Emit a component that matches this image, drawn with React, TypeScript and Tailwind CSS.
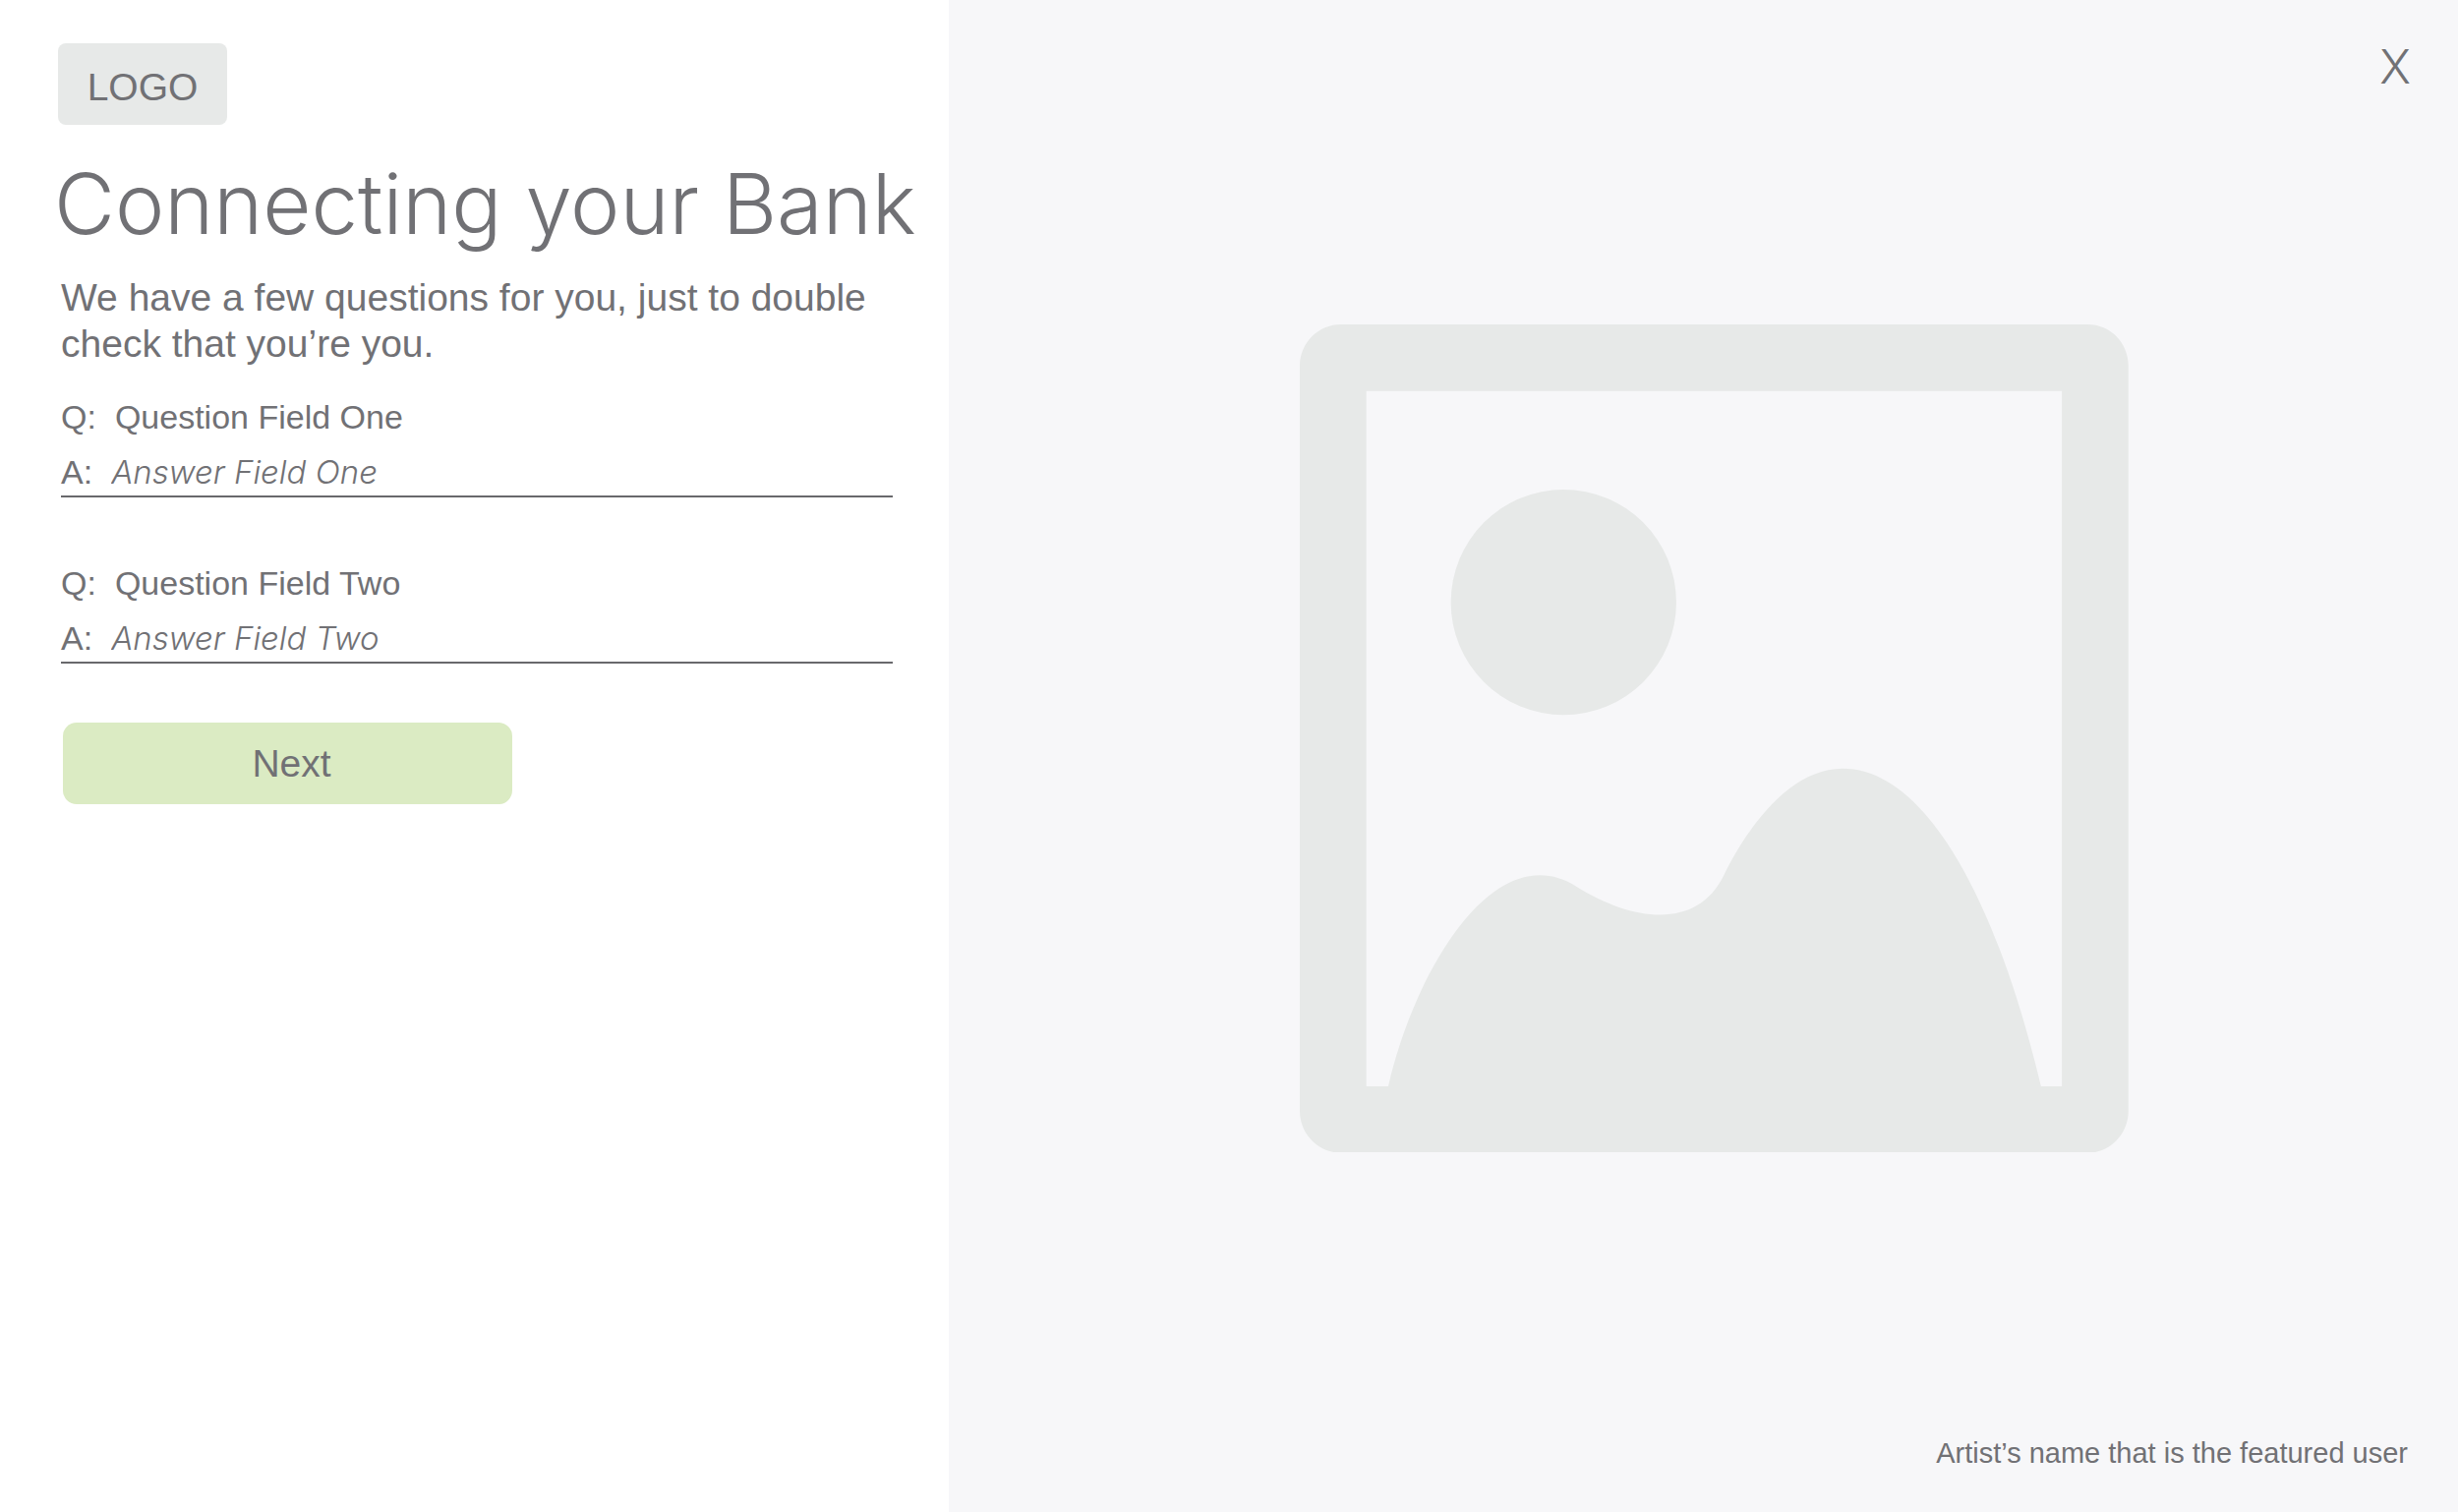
import { useId } from 'react';

type FieldProps = {
  question: string;
  placeholder: string;
};

function QuestionField({ question, placeholder }: FieldProps) {
  const id = useId();
  return (
    <div className="flex flex-col gap-2">
      <label htmlFor={id} className="flex gap-[19px] text-[34px] leading-[48px]">
        <span>Q:</span>
        <span>{question}</span>
      </label>
      <div className="flex gap-[19px] border-b-2 border-[#68686c] text-[34px] leading-[48px]">
        <span>A:</span>
        <input
          id={id}
          type="text"
          placeholder={placeholder}
          className="h-12 min-w-0 flex-1 bg-transparent font-['Inter',sans-serif] text-[33px] font-light italic leading-[48px] outline-none placeholder:text-[#717175] placeholder:opacity-100"
        />
      </div>
    </div>
  );
}

function PicturePlaceholder() {
  return (
    <svg viewBox="0 0 1470 1470" className="w-[55.7%]" role="img" aria-label="Featured artwork">
      <path
        fill="#e7e9e8"
        fillRule="evenodd"
        d="M73 0H1398C1438 0 1470 33 1470 73V1396C1470 1436 1438 1470 1398 1470H73C33 1470 0 1436 0 1396V73C0 33 33 0 73 0ZM118 118V1352H157C202 1152 345 903 492 998C592 1060 706 1075 753 976C787 906 864 788 963 788C1110 788 1236 1020 1315 1352H1352V118Z"
      />
      <circle cx="468" cy="493" r="200" fill="#e7e9e8" />
    </svg>
  );
}

export default function App() {
  return (
    <main className="flex min-h-screen bg-white font-['Liberation_Sans',Arial,sans-serif] text-[#717175]">
      <section className="w-[38.6%] shrink-0 pt-11 pr-[57px] pl-[62px]">
        <div className="-ml-[3px] flex h-[83px] w-[172px] items-center justify-center rounded-lg bg-[#e7e9e8] pt-1.5 text-[39px] leading-none">
          LOGO
        </div>
        <h1 className="mt-[31px] -ml-[7px] whitespace-nowrap font-['Inter',sans-serif] text-[85px] font-light leading-[100px]">
          Connecting your Bank
        </h1>
        <p className="mt-[21px] text-[39px] leading-[47px]">
          We have a few questions for you, just to double check that you’re you.
        </p>
        <form className="mt-[27px]" onSubmit={(e) => e.preventDefault()}>
          <div className="flex flex-col gap-[63px]">
            <QuestionField question="Question Field One" placeholder="Answer Field One" />
            <QuestionField question="Question Field Two" placeholder="Answer Field Two" />
          </div>
          <button
            type="submit"
            className="mt-[60px] ml-[2px] h-[83px] w-[457px] rounded-[14px] bg-[#dbebc3] pl-2 text-[39px] leading-none"
          >
            Next
          </button>
        </form>
      </section>
      <aside className="flex flex-1 flex-col bg-[#f7f7f9] pt-10 pb-10">
        <button
          type="button"
          aria-label="Close"
          className="mr-[48px] self-end font-['Inter',sans-serif] text-[48px] font-light leading-[56px]"
        >
          X
        </button>
        <div className="flex flex-1 items-center justify-center pb-[52px] pl-[22px]">
          <PicturePlaceholder />
        </div>
        <p className="mr-[51px] self-end text-[29px] leading-10">
          Artist’s name that is the featured user
        </p>
      </aside>
    </main>
  );
}
